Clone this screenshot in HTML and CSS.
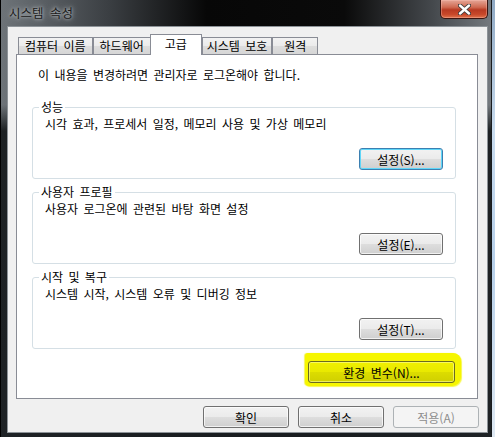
FILE: index.html
```html
<!DOCTYPE html>
<html lang="ko">
<head>
    <meta charset="UTF-8">
    <meta name="viewport" content="width=device-width, initial-scale=1.0">
    <title>시스템 속성</title>
    <link rel="stylesheet" href="styles.css">
</head>
<body>
    <div class="window">
        <div class="titlebar">
            <span class="title">시스템 속성</span>
            <button class="close-btn" aria-label="닫기">
                <svg width="13" height="11" viewBox="0 0 13 11">
                    <path d="M2 1.5 L11 9.5 M11 1.5 L2 9.5" stroke="#3b3b3b" stroke-width="4.2" stroke-linecap="round"/>
                    <path d="M2 1.5 L11 9.5 M11 1.5 L2 9.5" stroke="#ffffff" stroke-width="2.4" stroke-linecap="round"/>
                </svg>
            </button>
        </div>

        <div class="client">
            <div class="tabs">
                <div class="tab">컴퓨터 이름</div>
                <div class="tab">하드웨어</div>
                <div class="tab selected">고급</div>
                <div class="tab">시스템 보호</div>
                <div class="tab">원격</div>
            </div>

            <div class="panel">
                <p class="notice">이 내용을 변경하려면 관리자로 로그온해야 합니다.</p>

                <fieldset class="group">
                    <legend>성능</legend>
                    <p class="group-desc">시각 효과, 프로세서 일정, 메모리 사용 및 가상 메모리</p>
                    <div class="group-actions">
                        <button class="btn btn-focus">설정(S)...</button>
                    </div>
                </fieldset>

                <fieldset class="group">
                    <legend>사용자 프로필</legend>
                    <p class="group-desc">사용자 로그온에 관련된 바탕 화면 설정</p>
                    <div class="group-actions">
                        <button class="btn">설정(E)...</button>
                    </div>
                </fieldset>

                <fieldset class="group">
                    <legend>시작 및 복구</legend>
                    <p class="group-desc">시스템 시작, 시스템 오류 및 디버깅 정보</p>
                    <div class="group-actions">
                        <button class="btn">설정(T)...</button>
                    </div>
                </fieldset>

                <div class="env-row">
                    <span class="marker">
                        <button class="btn btn-marked">환경 변수(N)...</button>
                    </span>
                </div>
            </div>

            <div class="dialog-actions">
                <button class="btn btn-wide">확인</button>
                <button class="btn btn-wide">취소</button>
                <button class="btn btn-wide" disabled>적용(A)</button>
            </div>
        </div>
    </div>
</body>
</html>
```

FILE: styles.css
```css
body {
    margin: 0;
    background: linear-gradient(180deg, #8fa9c4 0%, #c9dcef 30%, #b7d0ea 60%, #dfe9f3 100%);
    font-family: "Noto Sans CJK KR", "Noto Sans", sans-serif;
    font-size: 12px;
    word-spacing: 2px;
    color: #000;
}
.window {
    width: 492px;
    height: 437px;
    background:
        linear-gradient(180deg, rgba(0, 0, 0, 0) 0, rgba(0, 0, 0, 0) 24%, rgba(22, 26, 28, 0.92) 30%, rgba(26, 30, 33, 0.95) 100%),
        linear-gradient(90deg, #6e7479 0%, #3b3f43 22%, #070707 42%, #0a0a0a 70%, #45494d 88%, #757a7f 100%);
    box-shadow: inset 1px 0 0 #000, inset -1px 0 0 #1a1c1e;
}
.titlebar {
    height: 27px;
    display: flex;
    align-items: flex-start;
    justify-content: space-between;
    padding-left: 9px;
    box-sizing: border-box;
}
.title {
    margin-top: 5px;
    line-height: 16px;
    font-size: 12.5px;
    word-spacing: 3px;
    color: #1a1a1a;
    text-shadow: 0 0 6px rgba(200, 205, 210, 0.9), 0 0 3px rgba(200, 205, 210, 0.9);
}
.close-btn {
    width: 48px;
    height: 19px;
    margin-right: 4px;
    padding: 0;
    border: 1px solid #3a1410;
    border-top: none;
    border-radius: 0 0 5px 5px;
    background: linear-gradient(180deg, #e5a697 0%, #cf6a52 40%, #b83a22 55%, #c8482a 80%, #e0734c 100%);
    box-shadow: inset 0 0 0 1px rgba(255, 200, 190, 0.35);
    display: flex;
    align-items: center;
    justify-content: center;
}
.client {
    margin-left: 8px;
    width: 479px;
    height: 405px;
    background: #f0f0f0;
    box-shadow: 0 0 0 1px #8d9398;
    display: flex;
    flex-direction: column;
}
.tabs {
    display: flex;
    align-items: flex-end;
    height: 20px;
    margin-top: 7px;
    padding-left: 10px;
}
.tab {
    min-width: 46px;
    height: 17px;
    padding: 0 6px;
    line-height: 16px;
    text-align: center;
    border: 1px solid #898c95;
    border-bottom: none;
    box-sizing: border-box;
    background: linear-gradient(180deg, #f2f2f2 0%, #ebebeb 50%, #dddddd 51%, #d6d6d6 100%);
    white-space: nowrap;
}
.tab.selected {
    position: relative;
    z-index: 1;
    min-width: 52px;
    height: 21px;
    margin: 0 -2px -1px -1px;
    padding: 0 7px;
    line-height: 17px;
    background: #fff;
}
.tab.selected + .tab {
    margin-left: 2px;
    padding: 0 4px;
}
.panel {
    margin: 0 9px 0 8px;
    height: 345px;
    box-sizing: border-box;
    border: 1px solid #898c95;
    background: #fff;
}
.notice {
    margin: 12px 0 0 21px;
    line-height: 16px;
}
.group {
    margin: 17px 21px 0 15px;
    padding: 0 12px 8px;
    border: 1px solid #d5dfe5;
    border-radius: 3px;
}
.group + .group {
    margin-top: 6px;
}
.group legend {
    margin-left: -6px;
    padding: 0 2px;
    line-height: 14px;
}
.group-desc {
    margin: 2px 0 0;
    line-height: 16px;
}
.group-actions {
    display: flex;
    justify-content: flex-end;
    margin-top: 16px;
}
.btn {
    width: 84px;
    height: 22px;
    padding: 0;
    font-family: inherit;
    font-size: 12px;
    word-spacing: 2px;
    color: #000;
    border: 1px solid #707070;
    border-radius: 3px;
    background: linear-gradient(180deg, #f2f2f2 0%, #ebebeb 48%, #dddddd 52%, #cfcfcf 100%);
    box-shadow: inset 0 0 0 1px rgba(255, 255, 255, 0.7);
}
.btn-focus {
    border-color: #3c7fb1;
    box-shadow: inset 0 0 0 1px #5fd6f8;
}
.btn:disabled {
    color: #8d8d8d;
    border-color: #adb2b5;
    background: #f4f4f4;
    box-shadow: none;
}
.env-row {
    display: flex;
    justify-content: flex-end;
    margin: 12px 22px 0 15px;
}
.marker {
    display: inline-flex;
    margin: -8px -6px -3px -3px;
    padding: 8px 6px 3px 3px;
    background: #f6f600;
    border-radius: 3px 8px 9px 4px;
    box-shadow: 1px 1px 1px #f8f84c, -1px 0 1px #f4f460;
}
.btn-marked {
    width: 147px;
    border-color: #6a6a20;
    background: linear-gradient(180deg, #f0f000 0%, #e9e900 48%, #dcdc00 52%, #d0d000 100%);
    box-shadow: inset 0 0 0 1px rgba(255, 255, 160, 0.6);
}
.dialog-actions {
    display: flex;
    justify-content: flex-end;
    gap: 9px;
    margin: 7px 8px 0 0;
}
.btn-wide {
    width: 86px;
}
```
